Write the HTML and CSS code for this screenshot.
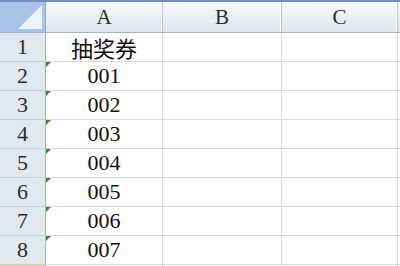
FILE: index.html
```html
<!DOCTYPE html>
<html lang="zh">
<head>
    <meta charset="UTF-8">
    <meta name="viewport" content="width=device-width, initial-scale=1.0">
    <title>抽奖券</title>
    <link rel="stylesheet" href="styles.css">
</head>
<body>
    <div class="sheet">
        <!-- Column headers -->
        <div class="corner"></div>
        <div class="col-head">A</div>
        <div class="col-head">B</div>
        <div class="col-head">C</div>
        <div class="col-head edge"></div>

        <!-- Rows -->
        <div class="row-head">1</div>
        <div class="cell">抽奖券</div>
        <div class="cell"></div>
        <div class="cell"></div>
        <div class="cell edge"></div>

        <div class="row-head">2</div>
        <div class="cell text-num">001</div>
        <div class="cell"></div>
        <div class="cell"></div>
        <div class="cell edge"></div>

        <div class="row-head">3</div>
        <div class="cell text-num">002</div>
        <div class="cell"></div>
        <div class="cell"></div>
        <div class="cell edge"></div>

        <div class="row-head">4</div>
        <div class="cell text-num">003</div>
        <div class="cell"></div>
        <div class="cell"></div>
        <div class="cell edge"></div>

        <div class="row-head">5</div>
        <div class="cell text-num">004</div>
        <div class="cell"></div>
        <div class="cell"></div>
        <div class="cell edge"></div>

        <div class="row-head">6</div>
        <div class="cell text-num">005</div>
        <div class="cell"></div>
        <div class="cell"></div>
        <div class="cell edge"></div>

        <div class="row-head">7</div>
        <div class="cell text-num">006</div>
        <div class="cell"></div>
        <div class="cell"></div>
        <div class="cell edge"></div>

        <div class="row-head">8</div>
        <div class="cell text-num">007</div>
        <div class="cell"></div>
        <div class="cell"></div>
        <div class="cell edge"></div>

        <!-- Next row peeking in -->
        <div class="row-head next"></div>
        <div class="cell next"></div>
        <div class="cell next"></div>
        <div class="cell next"></div>
        <div class="cell next edge"></div>
    </div>
</body>
</html>
```

FILE: styles.css
```css
* {
    margin: 0;
    padding: 0;
    box-sizing: border-box;
}

body {
    width: 400px;
    height: 266px;
    overflow: hidden;
    background: #ffffff;
    font-family: 'Liberation Serif', 'Noto Sans CJK SC', serif;
    color: #1a1a1a;
}

.sheet {
    display: grid;
    grid-template-columns: 46px 117px 119px 116px 1fr;
    grid-template-rows: 31px repeat(8, 29px) 1fr;
    height: 266px;
    border-top: 2px solid #6f8fc6;
}

.corner {
    position: relative;
    background: #a9c3e8;
    border-right: 1px solid #8eaad2;
    border-bottom: 1px solid #9fb5d4;
    overflow: hidden;
}

.corner::after {
    content: "";
    position: absolute;
    right: 3px;
    bottom: 3px;
    width: 0;
    height: 0;
    border-left: 24px solid transparent;
    border-bottom: 24px solid #eef3fb;
}

.col-head {
    display: flex;
    justify-content: center;
    align-items: center;
    font-size: 21px;
    color: #2d2d2d;
    background: linear-gradient(#f6f8fb, #dfe5ee);
    border-right: 1px solid #b8c8dc;
    border-bottom: 1px solid #9fb5d4;
    box-shadow: inset -1px 0 0 #ffffff;
}

.col-head.edge {
    border-right: none;
    box-shadow: none;
}

.row-head {
    display: flex;
    justify-content: center;
    align-items: center;
    font-size: 22px;
    color: #2d2d2d;
    background: #e1e8f2;
    border-right: 1px solid #9fb5d4;
    border-bottom: 1px solid #c3d0e2;
}

.cell {
    position: relative;
    display: flex;
    justify-content: center;
    align-items: center;
    font-size: 22px;
    color: #111111;
    border-right: 1px solid #dadada;
    border-bottom: 1px solid #dadada;
}

.cell.edge {
    border-right: none;
}

/* number-stored-as-text marker */
.text-num::before {
    content: "";
    position: absolute;
    top: 0;
    left: 0;
    width: 0;
    height: 0;
    border-top: 5px solid #2e8b2e;
    border-right: 5px solid transparent;
}

.row-head.next {
    background: #f3c98a;
    border-bottom: none;
}

.cell.next {
    border-bottom: none;
}
```
